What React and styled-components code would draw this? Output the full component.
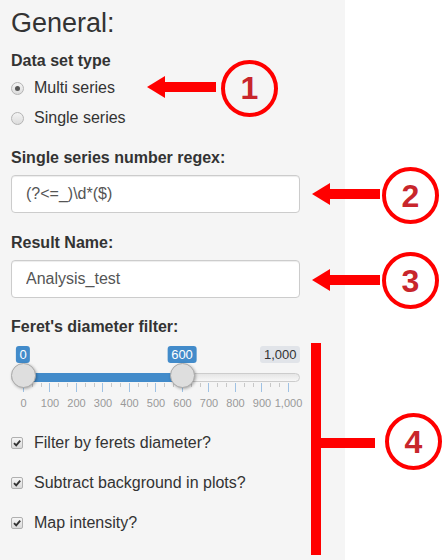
import React from "react";
import styled, { createGlobalStyle } from "styled-components";

const GlobalStyle = createGlobalStyle`
  html, body {
    margin: 0;
    padding: 0;
    background: #fff;
  }
  body {
    font-family: "Liberation Sans", Arial, sans-serif;
    color: #333;
  }
`;

const Page = styled.div`
  position: relative;
  width: 442px;
  height: 560px;
  overflow: hidden;
  background: #fff;
`;

const Sidebar = styled.div`
  width: 345px;
  height: 560px;
  box-sizing: border-box;
  background: #f5f5f5;
  padding: 8px 45px 0 11px;
  display: flex;
  flex-direction: column;
`;

const Title = styled.h3`
  margin: 0;
  font-size: 27px;
  line-height: 30px;
  font-weight: 400;
  color: #333;
`;

const Label = styled.div`
  margin-top: ${(p) => p.gap}px;
  font-size: 16px;
  line-height: 20px;
  font-weight: 700;
`;

const OptionList = styled.div`
  margin-top: ${(p) => p.gap}px;
  display: flex;
  flex-direction: column;
`;

const OptionRow = styled.label`
  display: flex;
  align-items: center;
  gap: ${(p) => p.gap || 10}px;
  height: ${(p) => p.h || 30}px;
  font-size: 16px;
  line-height: 20px;
`;

const RadioDot = styled.span`
  width: 13px;
  height: 13px;
  box-sizing: border-box;
  border-radius: 50%;
  border: 1px solid #b4b4b4;
  background: linear-gradient(#f4f4f4, #dcdcdc);
  display: flex;
  align-items: center;
  justify-content: center;
  &::after {
    content: "";
    width: 5px;
    height: 5px;
    border-radius: 50%;
    background: ${(p) => (p.checked ? "#555" : "transparent")};
  }
`;

const CheckBox = styled.span`
  width: 12px;
  height: 12px;
  box-sizing: border-box;
  border-radius: 2px;
  border: 1px solid #b0b0b0;
  background: linear-gradient(#f6f6f6, #dadada);
  display: flex;
  align-items: center;
  justify-content: center;
`;

const TextInput = styled.input`
  display: block;
  margin-top: 7px;
  width: 100%;
  height: 38px;
  box-sizing: border-box;
  padding: 0 14px;
  border: 1px solid #ccc;
  border-radius: 4px;
  background: #fff;
  box-shadow: inset 0 1px 1px rgba(0, 0, 0, 0.075);
  font-family: "Liberation Sans", Arial, sans-serif;
  font-size: 16px;
  color: #555;
  outline: none;
`;

/* range slider */

const SliderWrap = styled.div`
  margin-top: 9px;
  display: flex;
  flex-direction: column;
`;

const BubbleRow = styled.div`
  position: relative;
  height: 17px;
  display: flex;
  justify-content: flex-end;
`;

const Bubble = styled.span`
  height: 17px;
  padding: 0 3.5px;
  border-radius: 3px;
  font-size: 13px;
  line-height: 17px;
  background: ${(p) => (p.muted ? "#e1e4e9" : "#428bca")};
  color: ${(p) => (p.muted ? "#333" : "#fff")};
  white-space: nowrap;
`;

const ValueBubble = styled(Bubble)`
  position: absolute;
  top: 0;
  transform: translateX(-50%);
`;

const TrackRow = styled.div`
  position: relative;
  height: 25px;
  display: flex;
  align-items: center;
  padding-top: 4px;
  box-sizing: border-box;
`;

const Track = styled.div`
  flex: 1;
  height: 9px;
  box-sizing: border-box;
  border: 1px solid #ccc;
  border-radius: 6px;
  background: linear-gradient(#ddd -50%, #fff 150%);
  display: flex;
`;

const Bar = styled.div`
  height: 9px;
  margin-top: -1px;
  background: #428bca;
`;

const Handle = styled.span`
  position: absolute;
  top: 0;
  width: 25px;
  height: 25px;
  box-sizing: border-box;
  border-radius: 50%;
  border: 1px solid #aaa;
  background: #dedede;
  box-shadow: 1px 1px 3px rgba(0, 0, 0, 0.3);
`;

const TickRow = styled.div`
  margin: -5px 11px 0 12px;
  height: 9px;
  display: flex;
  justify-content: space-between;
  align-items: flex-start;
`;

const Tick = styled.span`
  width: 1px;
  height: ${(p) => (p.major ? 9 : 4)}px;
  background: ${(p) => (p.major ? "#9fc2e4" : "#c8c8c8")};
`;

const TickLabels = styled.div`
  margin: 5px 11px 0 12px;
  display: flex;
  justify-content: space-between;
`;

const TickLabel = styled.span`
  width: 1px;
  display: flex;
  justify-content: center;
  font-size: 11px;
  line-height: 12px;
  color: #999;
  white-space: nowrap;
`;

/* annotations drawn over the screenshot */

const Badge = styled.div`
  position: absolute;
  left: ${(p) => p.x - 28.5}px;
  top: ${(p) => p.y - 28.5}px;
  width: 57px;
  height: 57px;
  box-sizing: border-box;
  border: 4.5px solid #ff0000;
  border-radius: 50%;
  display: flex;
  align-items: center;
  justify-content: center;
  font-size: 32px;
  font-weight: 700;
  color: #c8262c;
  line-height: 1;
`;

const Overlay = styled.svg`
  position: absolute;
  left: 0;
  top: 0;
  pointer-events: none;
`;

const pos = (v) => 12 + v * 0.265;

const Arrow = ({ tipX, y, endX }) => (
  <g fill="#ff0000">
    <polygon points={`${tipX},${y} ${tipX + 18},${y - 11} ${tipX + 18},${y + 11}`} />
    <rect x={tipX + 17} y={y - 5} width={endX - tipX - 17} height={10} />
  </g>
);

function RangeSlider({ from, to, max }) {
  const ticks = [];
  for (let i = 0; i <= 30; i++) ticks.push(<Tick key={i} major={i % 3 === 0} />);
  const labels = [];
  for (let v = 0; v <= max; v += 100) {
    labels.push(<TickLabel key={v}>{v.toLocaleString("en-US")}</TickLabel>);
  }
  return (
    <SliderWrap>
      <BubbleRow>
        <ValueBubble style={{ left: pos(from) }}>{from}</ValueBubble>
        <ValueBubble style={{ left: pos(to) }}>{to}</ValueBubble>
        <Bubble muted>{max.toLocaleString("en-US")}</Bubble>
      </BubbleRow>
      <TrackRow>
        <Track>
          <Bar style={{ marginLeft: pos(from) - 1, width: pos(to) - pos(from) }} />
        </Track>
        <Handle style={{ left: pos(from) - 12.5 }} />
        <Handle style={{ left: pos(to) - 12.5 }} />
      </TrackRow>
      <TickRow>{ticks}</TickRow>
      <TickLabels>{labels}</TickLabels>
    </SliderWrap>
  );
}

const CheckMark = () => (
  <svg width="10" height="10" viewBox="0 0 10 10">
    <path d="M2 5.2 L4.2 7.4 L8.2 2.6" fill="none" stroke="#333" strokeWidth="1.9" />
  </svg>
);

export default function App() {
  const checks = [
    "Filter by ferets diameter?",
    "Subtract background in plots?",
    "Map intensity?",
  ];
  return (
    <Page>
      <GlobalStyle />
      <Sidebar>
        <Title>General:</Title>
        <Label gap={13}>Data set type</Label>
        <OptionList gap={2}>
          <OptionRow>
            <RadioDot checked />
            Multi series
          </OptionRow>
          <OptionRow>
            <RadioDot />
            Single series
          </OptionRow>
        </OptionList>
        <Label gap={15}>Single series number regex:</Label>
        <TextInput readOnly defaultValue="(?<=_)\d*($)" />
        <Label gap={20}>Result Name:</Label>
        <TextInput readOnly defaultValue="Analysis_test" />
        <Label gap={19}>Feret's diameter filter:</Label>
        <RangeSlider from={0} to={600} max={1000} />
        <OptionList gap={14}>
          {checks.map((c) => (
            <OptionRow key={c} h={40} gap={11}>
              <CheckBox>
                <CheckMark />
              </CheckBox>
              {c}
            </OptionRow>
          ))}
        </OptionList>
      </Sidebar>

      <Overlay width="442" height="560">
        <Arrow tipX={147} y={87} endX={216} />
        <Arrow tipX={312} y={194} endX={380} />
        <Arrow tipX={312} y={280} endX={380} />
        <g fill="#ff0000">
          <rect x={311} y={343} width={10} height={212} />
          <rect x={321} y={438} width={54} height={10} />
        </g>
      </Overlay>
      <Badge x={249.5} y={88}>1</Badge>
      <Badge x={410.5} y={195.5}>2</Badge>
      <Badge x={410.5} y={280.5}>3</Badge>
      <Badge x={413.5} y={441.5}>4</Badge>
    </Page>
  );
}
